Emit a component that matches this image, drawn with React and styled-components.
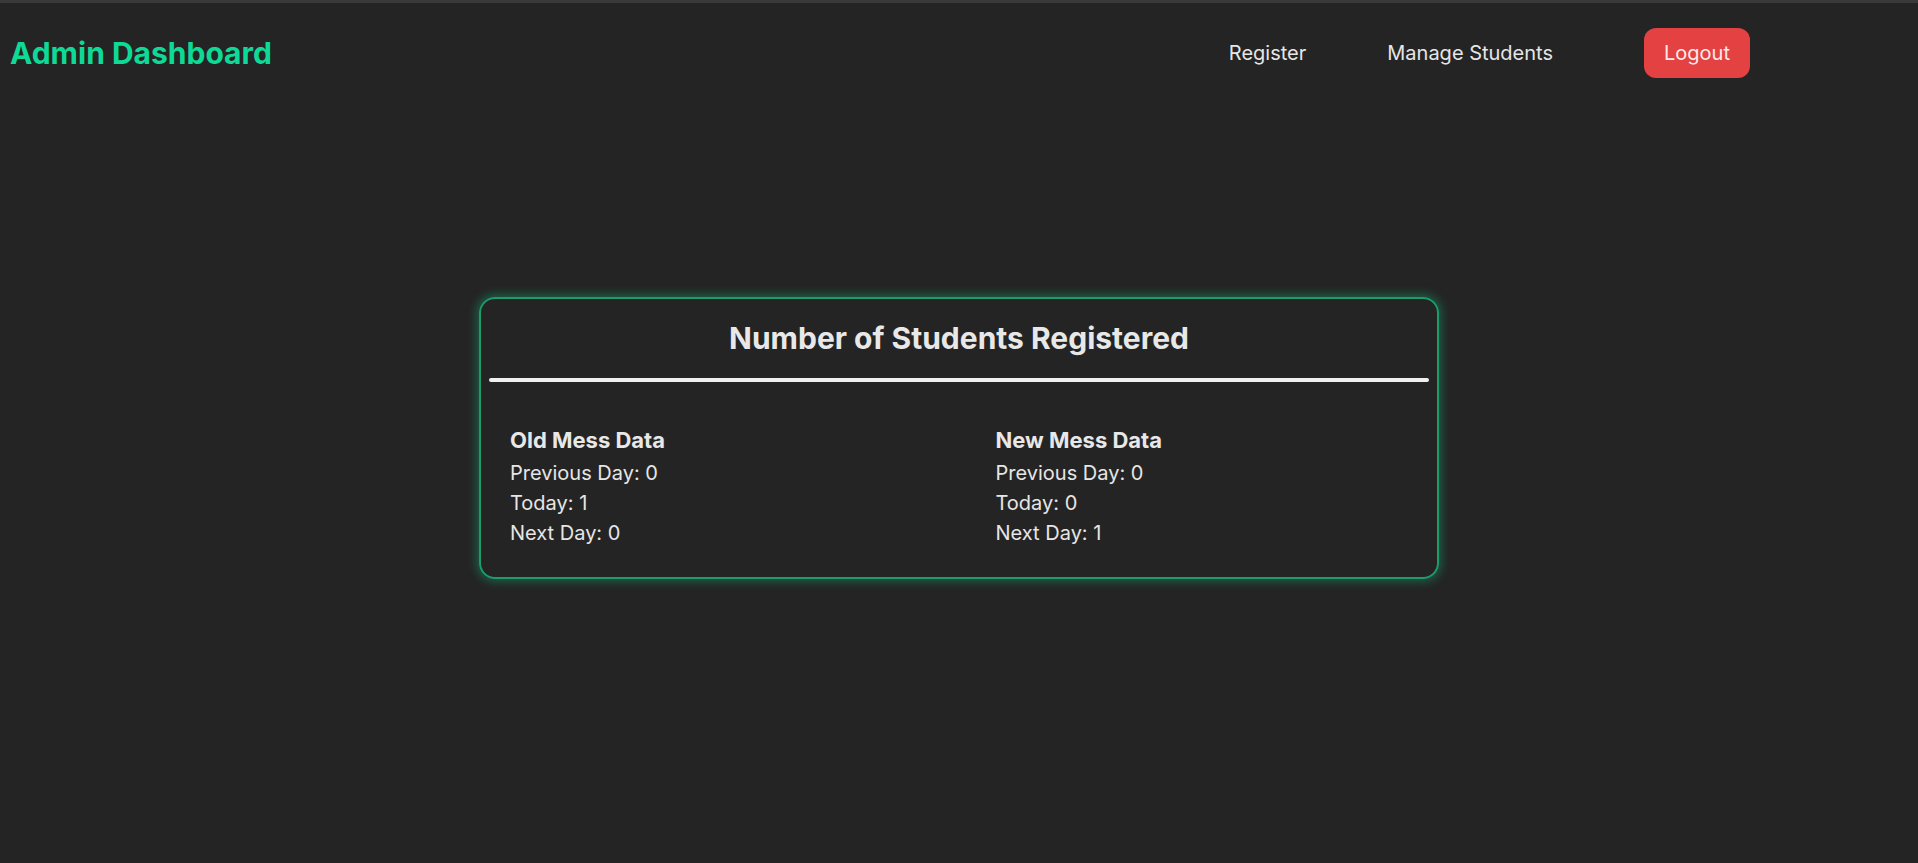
import styled, { createGlobalStyle } from "styled-components";

const GlobalStyle = createGlobalStyle`
  html, body {
    margin: 0;
    padding: 0;
    background: #242424;
    font-family: Inter, "Noto Sans", sans-serif;
    color: #e8e8e8;
  }
`;

const Page = styled.div`
  min-height: 863px;
  border-top: 3px solid #3a3a3a;
  box-sizing: border-box;
`;

const Navbar = styled.nav`
  display: flex;
  align-items: center;
  justify-content: space-between;
  height: 100px;
  padding: 6px 168px 0 10px;
  box-sizing: border-box;
  margin-top: -3px;
`;

const Brand = styled.h1`
  margin: 0;
  font-size: 30px;
  font-weight: 700;
  color: #0fd997;
`;

const Links = styled.div`
  display: flex;
  align-items: center;
`;

const NavLink = styled.a`
  font-size: 20px;
  color: #e6e6e6;
  text-decoration: none;
  margin-right: ${(p) => p.$gap || 0}px;
  cursor: pointer;
`;

const LogoutButton = styled.button`
  height: 50px;
  width: 106px;
  border: none;
  border-radius: 12px;
  background: #e34142;
  color: #ffe9e9;
  font-family: inherit;
  font-size: 20px;
  cursor: pointer;
`;

const Main = styled.main`
  display: flex;
  justify-content: center;
  padding-top: 197px;
`;

const Card = styled.section`
  width: 960px;
  box-sizing: border-box;
  border: 2px solid #1c9c6a;
  border-radius: 16px;
  box-shadow: 0 0 10px 3px rgba(16, 185, 129, 0.38);
  padding: 0 8px 29px;
`;

const Title = styled.h2`
  margin: 0;
  padding: 21px 0 22px;
  text-align: center;
  font-size: 30px;
  font-weight: 700;
  color: #e8e8e8;
`;

const Divider = styled.hr`
  margin: 0;
  height: 4px;
  border: none;
  border-radius: 2px;
  background: #f0f0f0;
`;

const Columns = styled.div`
  display: grid;
  grid-template-columns: 1fr 1fr;
  column-gap: 72px;
  padding: 43px 20px 0 21px;
`;

const Column = styled.div`
  display: flex;
  flex-direction: column;
`;

const ColumnTitle = styled.h3`
  margin: 0 0 3px;
  font-size: 22px;
  font-weight: 700;
  line-height: 30px;
  color: #e8e8e8;
`;

const Stat = styled.p`
  margin: 0;
  font-size: 20px;
  line-height: 30px;
  color: #e6e6e6;
`;

const mess = [
  { name: "Old Mess Data", prev: 0, today: 1, next: 0 },
  { name: "New Mess Data", prev: 0, today: 0, next: 1 },
];

export default function App() {
  return (
    <Page>
      <GlobalStyle />
      <Navbar>
        <Brand>Admin Dashboard</Brand>
        <Links>
          <NavLink $gap={81}>Register</NavLink>
          <NavLink $gap={91}>Manage Students</NavLink>
          <LogoutButton>Logout</LogoutButton>
        </Links>
      </Navbar>
      <Main>
        <Card>
          <Title>Number of Students Registered</Title>
          <Divider />
          <Columns>
            {mess.map((m) => (
              <Column key={m.name}>
                <ColumnTitle>{m.name}</ColumnTitle>
                <Stat>Previous Day: {m.prev}</Stat>
                <Stat>Today: {m.today}</Stat>
                <Stat>Next Day: {m.next}</Stat>
              </Column>
            ))}
          </Columns>
        </Card>
      </Main>
    </Page>
  );
}
